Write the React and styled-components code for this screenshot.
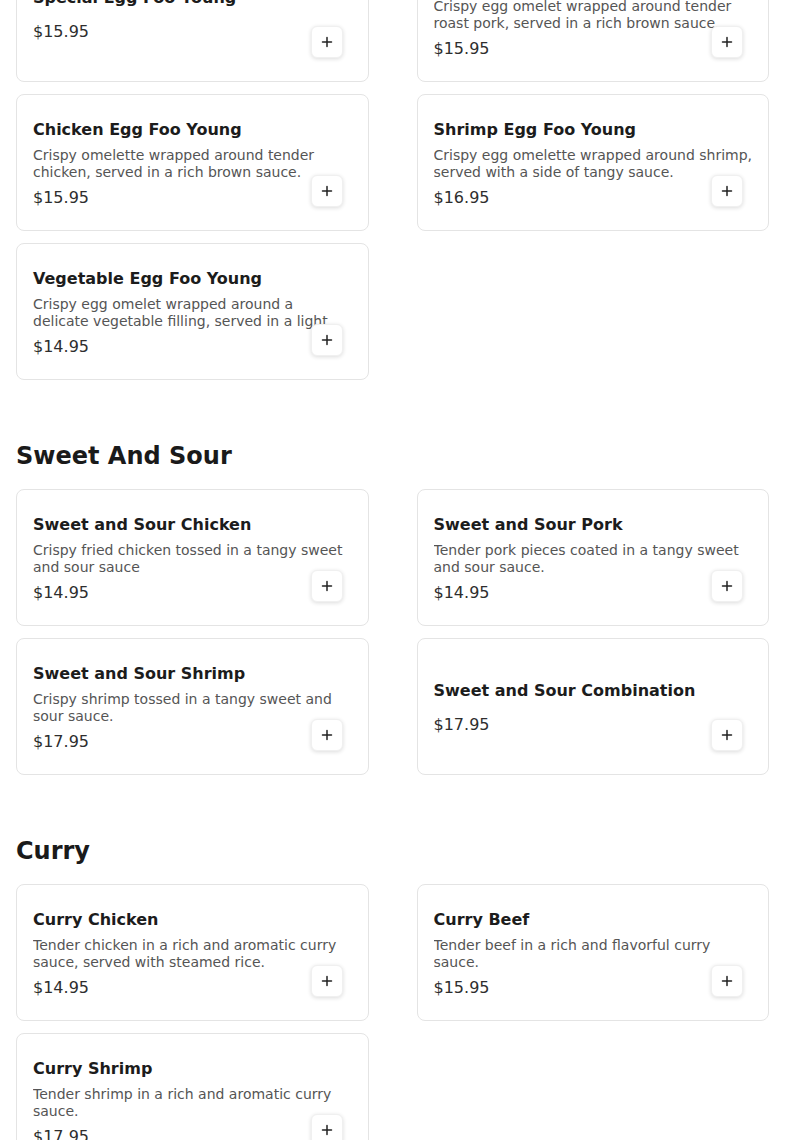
import React from "react";
import styled, { createGlobalStyle } from "styled-components";

const GlobalStyle = createGlobalStyle`
  html, body {
    margin: 0;
    padding: 0;
    background: #ffffff;
  }
  body {
    font-family: "DejaVu Sans", "Noto Sans", sans-serif;
    color: #1a1a1a;
    overflow: hidden;
  }
  * { box-sizing: border-box; }
`;

const Page = styled.main`
  padding: 0 16px;
  margin-top: -55px;
`;

const Section = styled.section`
  display: flex;
  flex-direction: column;
  & + & {
    margin-top: 58px;
  }
`;

const SectionTitle = styled.h2`
  margin: 0 0 15px;
  font-size: 24px;
  line-height: 36px;
  font-weight: 700;
  color: #1a1a1a;
`;

const Grid = styled.div`
  display: grid;
  grid-template-columns: 1fr 1fr;
  column-gap: 48px;
  row-gap: 12px;
`;

const Card = styled.article`
  position: relative;
  height: 137px;
  border: 1px solid #e4e4e4;
  border-radius: 8px;
  background: #ffffff;
  padding: 2px 16px 0;
  display: flex;
  flex-direction: column;
  justify-content: center;
`;

const Name = styled.h3`
  margin: 0;
  font-size: 16px;
  line-height: 24px;
  font-weight: 700;
  color: #1c1c1c;
`;

const Desc = styled.p`
  margin: 5px 0;
  font-size: 14px;
  line-height: 17px;
  max-height: 34px;
  color: #555555;
  overflow: hidden;
`;

const Price = styled.div`
  font-size: 16px;
  line-height: 24px;
  color: #2e2e2e;
`;

const AddButton = styled.button`
  position: absolute;
  right: 25px;
  bottom: 23px;
  width: 32px;
  height: 32px;
  padding: 0;
  border: 1px solid #f0f0f0;
  border-radius: 6px;
  background: #ffffff;
  box-shadow: 0 1px 4px rgba(0, 0, 0, 0.14);
  display: flex;
  align-items: center;
  justify-content: center;
  cursor: pointer;
`;

const PlusIcon = () => (
  <svg width="12" height="12" viewBox="0 0 12 12" fill="none">
    <path d="M6 1.5v9M1.5 6h9" stroke="#222" strokeWidth="1.5" strokeLinecap="round" />
  </svg>
);

const sections = [
  {
    title: null,
    items: [
      { name: "Special Egg Foo Young", desc: "", price: "$15.95" },
      {
        name: "Roast Pork Egg Foo Young",
        desc: "Crispy egg omelet wrapped around tender roast pork, served in a rich brown sauce.",
        price: "$15.95",
      },
      {
        name: "Chicken Egg Foo Young",
        desc: "Crispy omelette wrapped around tender chicken, served in a rich brown sauce.",
        price: "$15.95",
      },
      {
        name: "Shrimp Egg Foo Young",
        desc: "Crispy egg omelette wrapped around shrimp, served with a side of tangy sauce.",
        price: "$16.95",
      },
      {
        name: "Vegetable Egg Foo Young",
        desc: "Crispy egg omelet wrapped around a delicate vegetable filling, served in a light brown sauce.",
        price: "$14.95",
      },
    ],
  },
  {
    title: "Sweet And Sour",
    items: [
      {
        name: "Sweet and Sour Chicken",
        desc: "Crispy fried chicken tossed in a tangy sweet and sour sauce",
        price: "$14.95",
      },
      {
        name: "Sweet and Sour Pork",
        desc: "Tender pork pieces coated in a tangy sweet and sour sauce.",
        price: "$14.95",
      },
      {
        name: "Sweet and Sour Shrimp",
        desc: "Crispy shrimp tossed in a tangy sweet and sour sauce.",
        price: "$17.95",
      },
      { name: "Sweet and Sour Combination", desc: "", price: "$17.95" },
    ],
  },
  {
    title: "Curry",
    items: [
      {
        name: "Curry Chicken",
        desc: "Tender chicken in a rich and aromatic curry sauce, served with steamed rice.",
        price: "$14.95",
      },
      {
        name: "Curry Beef",
        desc: "Tender beef in a rich and flavorful curry sauce.",
        price: "$15.95",
      },
      {
        name: "Curry Shrimp",
        desc: "Tender shrimp in a rich and aromatic curry sauce.",
        price: "$17.95",
      },
    ],
  },
];

export default function App() {
  return (
    <>
      <GlobalStyle />
      <Page>
        {sections.map((s, i) => (
          <Section key={i}>
            {s.title && <SectionTitle>{s.title}</SectionTitle>}
            <Grid>
              {s.items.map((it) => (
                <Card key={it.name}>
                  <Name>{it.name}</Name>
                  <Desc>{it.desc}</Desc>
                  <Price>{it.price}</Price>
                  <AddButton aria-label={`Add ${it.name}`}>
                    <PlusIcon />
                  </AddButton>
                </Card>
              ))}
            </Grid>
          </Section>
        ))}
      </Page>
    </>
  );
}
